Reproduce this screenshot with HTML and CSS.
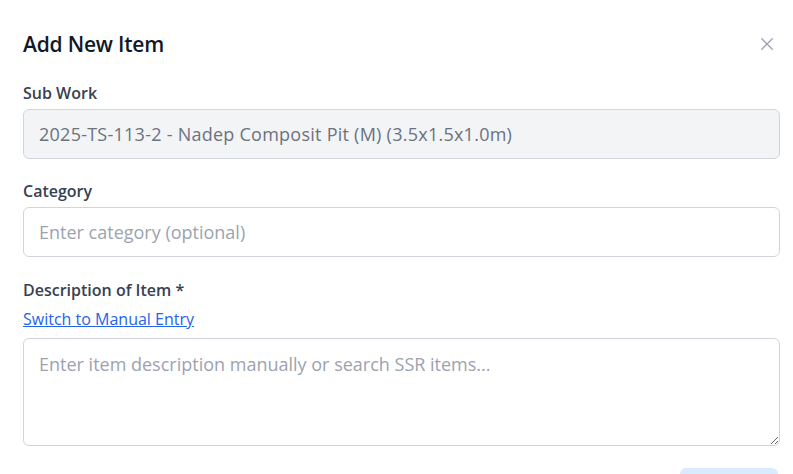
FILE: index.html
```html
<!DOCTYPE html>
<html>
<head>
<meta charset="utf-8">
<link rel="stylesheet" href="styles.css">
</head>
<body>
<div class="modal">
  <div class="header">
    <h2 class="title">Add New Item</h2>
    <button class="close" aria-label="Close">
      <svg width="18" height="18" viewBox="0 0 24 24" fill="none" stroke="currentColor" stroke-width="1.8" stroke-linecap="round"><path d="M5 5L19 19M19 5L5 19"/></svg>
    </button>
  </div>
  <div class="field first">
    <label class="label">Sub Work</label>
    <input class="input disabled" value="2025-TS-113-2 - Nadep Composit Pit (M) (3.5x1.5x1.0m)" disabled>
  </div>
  <div class="field">
    <label class="label">Category</label>
    <input class="input" placeholder="Enter category (optional)">
  </div>
  <div class="field">
    <label class="label">Description of Item *</label>
    <a class="link" href="#">Switch to Manual Entry</a>
    <textarea class="textarea" placeholder="Enter item description manually or search SSR items..."></textarea>
  </div>
  <div class="actions">
    <button class="btn"></button>
  </div>
</div>
</body>
</html>
```
FILE: styles.css
```css
* { box-sizing: border-box; }
html, body { margin: 0; padding: 0; background: #fff; }
body { font-family: "Open Sans", "Noto Sans", sans-serif; color: #111827; overflow: hidden; height: 474px; }
.modal { padding: 28px 14px 0 23px; width: 793px; height: 474px; overflow: hidden; }
.header { display: flex; justify-content: space-between; align-items: center; height: 32px; margin-bottom: 22px; }
.title { margin: 0; font-size: 21px; font-weight: 600; color: #111827; letter-spacing: -0.2px; }
.close { background: none; border: none; padding: 0; color: #9ca3af; display: flex; margin-right: 3px; }
.field { display: flex; flex-direction: column; margin-bottom: 22px; }
.field.first { margin-bottom: 21px; }
.label { font-size: 16px; font-weight: 600; color: #374151; margin-bottom: 5px; line-height: 22px; }
.input, .textarea { width: 757px; border: 1px solid #d1d5db; border-radius: 6px; font-family: inherit; font-size: 18px; padding: 0 15px; color: #6b7280; background: #fff; outline: none; }
.input { height: 50px; }
.input.disabled { background: #f3f4f6; color: #6b7280; -webkit-text-fill-color: #6b7280; opacity: 1; letter-spacing: 0.25px; }
.input::placeholder, .textarea::placeholder { color: #9ca3af; }
.link { color: #2563eb; font-size: 16px; text-decoration: underline; line-height: 22px; margin-top: 2px; margin-bottom: 8px; align-self: flex-start; }
.textarea { height: 108px; padding-top: 12px; resize: vertical; line-height: 26px; }
.actions { display: flex; justify-content: flex-end; margin-top: 9px; }
.btn { width: 98px; height: 36px; border: none; border-radius: 6px; background: #dbeafe; margin-right: 1px; }
```
